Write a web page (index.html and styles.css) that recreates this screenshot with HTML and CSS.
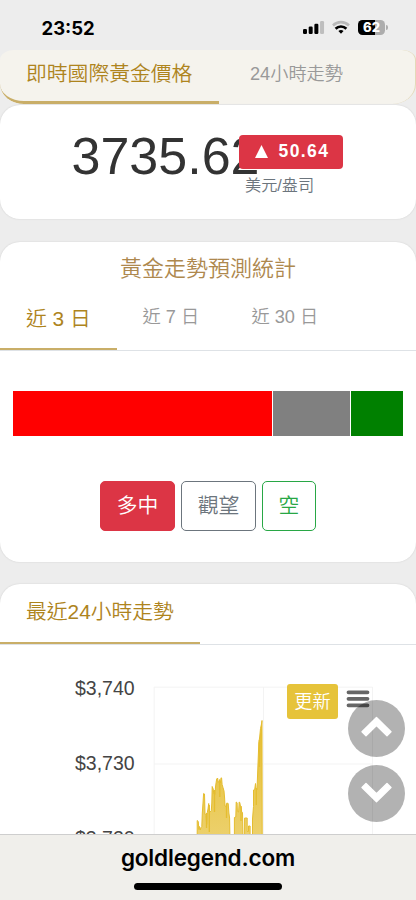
FILE: index.html
```html
<!DOCTYPE html>
<html lang="zh-Hant">
<head>
<meta charset="utf-8">
<meta name="viewport" content="width=device-width, initial-scale=1">
<title>goldlegend.com</title>
<link rel="stylesheet" href="styles.css">
</head>
<body>
<div class="screen">
  <header class="status">
    <span class="clock">23:52</span>
    <svg class="signal" viewBox="0 0 22 14" width="22" height="14"><rect x="0" y="9" width="4" height="5" rx="1.2"/><rect x="5.7" y="6.6" width="4" height="7.4" rx="1.2"/><rect x="11.4" y="3.7" width="4" height="10.3" rx="1.2"/><rect x="17.1" y="1" width="4" height="13" rx="1.2" fill="#bebebe"/></svg>
    <svg class="wifi" viewBox="0 0 18 14" width="18" height="14" fill="none" stroke-width="2.7"><path d="M1 5.4C5.5 1.1 12.5 1.1 17 5.4" stroke="#b9b9b9"/><path d="M3.6 8.7c3-2.9 7.8-2.9 10.8 0" stroke="#000"/><path d="M6.4 11c1.8-1.2 3.4-1.2 5.2 0L9 13.8z" fill="#000"/></svg>
    <span class="battery">62</span><i class="battery-tip"></i>
  </header>

  <main class="content">
    <nav class="price-tabs">
      <a class="tab tab-active price-now">即時國際黃金價格</a>
      <a class="tab price-day">24小時走勢</a>
    </nav>

    <section class="card price-card">
      <span class="price">3735.62</span>
      <div class="change">
        <span class="change-badge"><svg viewBox="0 0 13 13" width="13" height="13"><path d="M6.5 0 13 13H0z" fill="#fff"/></svg>50.64</span>
        <span class="unit">美元/盎司</span>
      </div>
    </section>

    <section class="card forecast-card">
      <h2 class="title">黃金走勢預測統計</h2>
      <nav class="tabs">
        <a class="tab tab-active days-3">近 3 日</a>
        <a class="tab days-7">近 7 日</a>
        <a class="tab days-30">近 30 日</a>
      </nav>
      <div class="ratio"><i class="rise"></i><i class="hold"></i><i class="fall"></i></div>
      <div class="actions">
        <button class="btn btn-rise">多中</button>
        <button class="btn btn-hold">觀望</button>
        <button class="btn btn-fall">空</button>
      </div>
    </section>

    <section class="card chart-card">
      <nav class="tabs chart-tabs"><a class="tab tab-active chart-tab">最近24小時走勢</a></nav>
      <div class="chart">
        <svg viewBox="0 645 416 189" width="416" height="189">
          <defs><linearGradient id="gold" gradientUnits="userSpaceOnUse" x1="0" y1="720" x2="0" y2="835"><stop offset="0" stop-color="#e5bd2f"/><stop offset="1" stop-color="#ecd06b"/></linearGradient></defs>
          <path d="M154 687.2H372.5M154 764H372.5M154.2 687V834M263.5 687V834M372.5 687V834" fill="none" stroke="#f3f3f3"/>
          <path class="area" d="M197.2 836V820.5L198.3 821.5 198.8 829.5 199.5 826.5 200.2 830 201 827.5 201.8 826.5 202.3 813 203 803 203.6 793.5 204.5 794 205 814 206 815.5 206.7 824.5 207.3 812.5 208 809 208.7 803.5 209.3 810.5 210.2 812 211.3 810.5 211.8 803 212.2 786.5 213.2 789 213.8 794 215 794.5 215.5 787 216.1 782.5 216.7 779 217.6 778 218.2 782.5 219.2 781 219.7 779.5 220.5 783 221 777.8 221.6 778 222.1 784.5 223 787.5 224 791 224.6 798 225 806 226.3 806.5 226.8 803 228.2 803.5 228.9 813 229.6 818 229.9 836Z"/>
          <path class="area" d="M234.4 836V817.5L235.8 817 236.2 802 237.1 802.8 237.4 811.5 238.6 812 239.2 802 239.8 802.5 240.4 806 241.1 806.5 241.7 812 242.5 812.5 243 836ZM244.6 836V818H247.2V831.5H248.5V826H250.1V836Z"/>
          <path class="area" d="M252.5 836V819L253.5 806.5V790L254.7 789.5 255.5 783.5 256 788.5 257 789.5 257.8 769 258.8 743 259.7 737 260.5 728.5 261.5 724 262 720.5 262.2 836Z"/>
          <path class="peaks" d="M206.5 813v15M209.3 805v27M214.5 790v22M219.8 781v16M226.5 804v14M241 806v15M256.3 788v17M259.4 740v27"/>
          <g class="axis"><text x="75" y="694.8">$3,740</text><text x="75" y="770.2">$3,730</text><text x="75" y="845.3">$3,720</text></g>
        </svg>
        <button class="refresh">更新</button>
        <svg class="menu" viewBox="0 0 24 20" width="24" height="20"><path d="M2.5 3.3h19M2.5 9.8h19M2.5 16.3h19" stroke="#666" stroke-width="3.8" stroke-linecap="round"/></svg>
      </div>
    </section>
  </main>

  <div class="scrollers">
    <svg viewBox="0 0 57 57" width="57" height="57"><circle cx="28.5" cy="28.5" r="28.5" fill="#000" fill-opacity=".3"/><path d="M28.5 17.6 43 31.8 39 35.8 28.5 25.6 18 35.8 14 31.8Z" fill="#fff" stroke="#fff" stroke-width="1.4" stroke-linejoin="round"/></svg>
    <svg viewBox="0 0 57 57" width="57" height="57"><circle cx="28.5" cy="28.5" r="28.5" fill="#000" fill-opacity=".3"/><path d="M28.5 36.8 43 22.6 39 18.6 28.5 28.8 18 18.6 14 22.6Z" fill="#fff" stroke="#fff" stroke-width="1.4" stroke-linejoin="round"/></svg>
  </div>

  <footer class="address"><span>goldlegend.com</span><i class="home"></i></footer>
</div>
</body>
</html>
```
FILE: styles.css
```css
* { box-sizing: border-box; }
body { margin: 0; background: #ededed; font-family: "Liberation Sans", "Noto Sans CJK TC", sans-serif; font-weight: 350; color: #333; }
.screen { position: relative; width: 416px; height: 900px; overflow: hidden; display: flex; flex-direction: column; background: #ededed; }
.status { height: 50px; flex: none; display: flex; align-items: flex-start; padding: 20px 28px 0 41.5px; }
.clock { width: 262.5px; font: 700 18.5px/16px Inter, sans-serif; color: #000; }
.signal { margin-right: 7px; }
.wifi { margin-right: 8px; }
.battery { width: 27px; height: 15px; border-radius: 4.5px; background: linear-gradient(90deg, #000 62%, #adadad 62%); color: #fff; font: 800 13px/15px Inter, sans-serif; text-align: center; }
.battery-tip { width: 2px; height: 5px; margin: 5px 0 0 1px; border-radius: 0 3px 3px 0; background: #adadad; }
.content { flex: none; height: 784px; overflow: hidden; }
.tab { color: #999; font-size: 18.2px; white-space: nowrap; }
.tab-active { color: #ae841d; font-size: 20.8px; border-bottom: 2.6px solid #c9ae68; }
.price-tabs { height: 53.5px; display: flex; background: #f5f3ed; border-right: 1px solid #e4d9b8; border-radius: 14px 14px 24px 24px / 10px 10px 20px 20px; overflow: hidden; }
.price-now { width: 218.5px; padding-left: 26px; line-height: 47px; border-bottom-width: 3px; border-bottom-left-radius: 24px 20px; }
.price-day { padding-left: 31.5px; line-height: 49px; }
.card { background: #fff; border-radius: 20px; box-shadow: 0 0 2px rgba(0,0,0,.13); }
.price-card { height: 113.5px; margin-top: 1.5px; display: flex; padding-left: 71.5px; }
.price { width: 167.5px; padding-top: 21px; font-size: 52px; line-height: 60px; white-space: nowrap; }
.change { position: relative; padding-top: 30px; display: flex; flex-direction: column; }
.change-badge { width: 104px; height: 33.5px; border-radius: 4px; background: #dc3545; color: #fff; display: flex; align-items: center; gap: 10.5px; padding-left: 16px; font-size: 17.5px; font-weight: 700; letter-spacing: 1.4px; }
.unit { padding-left: 6px; font-size: 16.2px; line-height: 32px; color: #6c757d; }
.forecast-card { height: 319.5px; margin-top: 23.5px; }
.title { margin: 0; height: 55px; text-align: center; font-size: 22px; line-height: 53px; font-weight: 350; color: #ae884e; }
.tabs { display: flex; border-bottom: 1px solid #dee2e6; }
.forecast-card .tabs { height: 54px; }
.forecast-card .tab { line-height: 41px; }
.forecast-card .days-3 { width: 116.5px; padding-left: 26px; line-height: 43px; }
.days-7 { width: 109px; padding-left: 26px; }
.days-30 { padding-left: 26px; }
.ratio { height: 45.5px; margin: 39.5px 13px 0; display: flex; gap: 1px; }
.rise { flex: 259; background: #f00; }
.hold { flex: 77; background: #808080; }
.fall { flex: 52; background: #008000; }
.actions { display: flex; justify-content: center; gap: 5.5px; margin-top: 45px; }
.btn { height: 49.5px; padding: 0; border: 1.3px solid; border-radius: 5px; background: #fff; font: 350 20.8px/45px "Liberation Sans", "Noto Sans CJK TC", sans-serif; }
.btn-rise { width: 75.5px; background: #dc3545; border-color: #dc3545; color: #fff; }
.btn-hold { width: 75.5px; color: #6c757d; }
.btn-fall { width: 54.5px; color: #28a745; }
.chart-card { height: 270px; margin-top: 22.5px; }
.chart-tabs { height: 60.5px; }
.chart-tab { width: 199.5px; padding-left: 26px; line-height: 55px; }
.chart { position: relative; height: 189px; }
.chart > svg:first-child { display: block; }
.area { fill: url(#gold); stroke: #e5bd2f; stroke-width: 1; }
.peaks { fill: none; stroke: #e5bd2f; stroke-width: 1.3; }
.axis { font: 19.5px "Liberation Sans", sans-serif; fill: #444; }
.refresh { position: absolute; left: 287px; top: 39px; width: 51px; height: 35px; padding: 0; border: 0; border-radius: 3px; background: #e6c33a; color: #fff; font: 350 18.2px/30px "Noto Sans CJK TC", sans-serif; padding-bottom: 3px; }
.menu { position: absolute; left: 345.5px; top: 44px; }
.scrollers { position: absolute; left: 347.5px; top: 699.5px; display: flex; flex-direction: column; gap: 8px; }
.address { height: 66px; flex: none; position: relative; display: flex; flex-direction: column; align-items: center; background: #f0efeb; border-top: 1px solid #cecece; color: #000; font: 600 22.5px/46px Inter, sans-serif; letter-spacing: -.15px; }
.address span { height: 48px; }
.home { width: 148px; height: 6.5px; border-radius: 4px; background: #000; }
```
